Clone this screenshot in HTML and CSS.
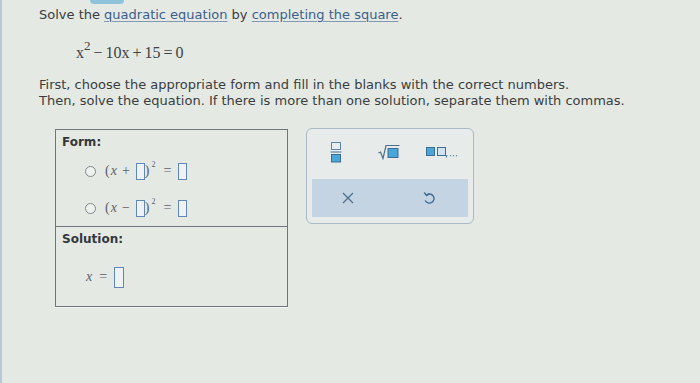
FILE: index.html
```html
<!DOCTYPE html>
<html>
<head>
<meta charset="utf-8">
<link rel="stylesheet" href="styles.css">
</head>
<body>
<div class="page">
  <div class="topbar"><div class="tab"></div></div>
  <div class="content">
    <p class="title">Solve the <span class="link">quadratic equation</span> by <span class="link">completing the square</span>.</p>
    <div class="equation"><span class="var">x</span><sup>2</sup><span class="op">−</span>10<span class="var">x</span><span class="op">+</span>15<span class="op">=</span>0</div>
    <p class="instr">First, choose the appropriate form and fill in the blanks with the correct numbers.<br>Then, solve the equation. If there is more than one solution, separate them with commas.</p>
    <div class="work">
      <div class="answer">
        <div class="cell form-cell">
          <div class="label">Form:</div>
          <div class="option">
            <span class="radio"></span>
            <span class="math"><span>(</span><i>x</i><span class="mop">+</span><span class="blank"></span><span>)</span><sup>2</sup><span class="meq">=</span><span class="blank"></span></span>
          </div>
          <div class="option second">
            <span class="radio"></span>
            <span class="math"><span>(</span><i>x</i><span class="mop">−</span><span class="blank"></span><span>)</span><sup>2</sup><span class="meq">=</span><span class="blank"></span></span>
          </div>
        </div>
        <div class="cell sol-cell">
          <div class="label">Solution:</div>
          <div class="solrow"><span class="math"><i>x</i><span class="meq sol">=</span><span class="blank tall"></span></span></div>
        </div>
      </div>
      <div class="palette">
        <div class="prow">
          <span class="pbtn b-frac">
            <svg width="12" height="22" viewBox="0 0 12 22"><rect x="1.5" y="1.5" width="9" height="7" fill="#e6eef4" stroke="#5f86a8" stroke-width="1"/><line x1="0.5" y1="11" x2="11.5" y2="11" stroke="#5f86a8" stroke-width="1.2"/><rect x="1.5" y="13.5" width="9" height="7.5" fill="#4aa6d8" stroke="#3a6f95" stroke-width="1"/></svg>
          </span>
          <span class="pbtn b-sqrt">
            <svg width="22" height="16" viewBox="0 0 22 16"><polyline points="0.5,9 2.5,8 5,14.5 8,1.5 21.5,1.5" fill="none" stroke="#4d6f8e" stroke-width="1.2"/><rect x="10" y="4.5" width="10" height="9" fill="#4aa6d8" stroke="#3a6f95" stroke-width="1"/></svg>
          </span>
          <span class="pbtn b-list">
            <svg width="34" height="12" viewBox="0 0 34 12"><rect x="0.5" y="1.5" width="8" height="8" fill="#4aa6d8" stroke="#3a6f95" stroke-width="1"/><rect x="11.5" y="1.5" width="8" height="8" fill="#cfe3f0" stroke="#3a6f95" stroke-width="1"/><path d="M21 9 L20.3 11.5" stroke="#3a6f95" stroke-width="1"/><circle cx="24.5" cy="9.8" r="0.7" fill="#5f86a8"/><circle cx="27.5" cy="9.8" r="0.7" fill="#5f86a8"/><circle cx="30.5" cy="9.8" r="0.7" fill="#5f86a8"/></svg>
          </span>
        </div>
        <div class="pactions">
          <span class="pbtn b-x">
            <svg width="12" height="12" viewBox="0 0 12 12"><path d="M1 1 L11 11 M11 1 L1 11" stroke="#4d6f8e" stroke-width="1.3" fill="none"/></svg>
          </span>
          <span class="pbtn b-undo">
            <svg width="12" height="14" viewBox="0 0 12 14"><path d="M3.2 4.2 A4.6 4.6 0 1 1 2.2 9.5" fill="none" stroke="#3f6f98" stroke-width="1.4"/><path d="M1.2 1.5 L3.6 4.6 L6.6 2.6" fill="none" stroke="#3f6f98" stroke-width="1.4"/></svg>
          </span>
        </div>
      </div>
    </div>
  </div>
</div>
</body>
</html>
```

FILE: styles.css
```css
html, body {
  margin: 0;
  padding: 0;
}
body {
  width: 700px;
  height: 383px;
  overflow: hidden;
  background: #e5e9e4;
  font-family: "DejaVu Sans", Verdana, sans-serif;
  color: #3a3d40;
}
.page {
  height: 383px;
  border-left: 2px solid #b9c7d6;
  box-sizing: border-box;
}
.topbar {
  height: 4px;
  padding-left: 88px;
}
.tab {
  width: 34px;
  height: 4px;
  background: #8fc3dc;
  border-radius: 0 0 6px 6px;
}
.content {
  padding-left: 37px;
}
p {
  margin: 0;
}
.title {
  font-size: 13px;
  line-height: 16px;
  margin-top: 3px;
}
.link {
  color: #3b5f8c;
  text-decoration: underline;
  text-decoration-color: #7f98b6;
  text-underline-offset: 2px;
}
.equation {
  font-family: "Liberation Serif", "Times New Roman", serif;
  font-size: 16px;
  line-height: 20px;
  margin-top: 20px;
  margin-left: 37px;
  color: #3e4145;
}
.equation sup {
  font-size: 13px;
  position: relative;
  top: -2px;
  vertical-align: super;
  line-height: 0;
  margin-left: 0;
}
.equation .op {
  margin: 0 3px;
}
.equation .var {
  font-style: normal;
}
.instr {
  font-size: 13px;
  line-height: 16px;
  margin-top: 14px;
}
.work {
  display: flex;
  align-items: flex-start;
  margin-top: 20px;
  margin-left: 16px;
}
.answer {
  width: 233px;
  border: 1px solid #6e787c;
  box-sizing: border-box;
  box-shadow: 0 1px 0 #f4f6f4;
}
.cell {
  padding: 5px 6px 0 6px;
}
.form-cell {
  height: 97px;
  box-sizing: border-box;
  border-bottom: 1px solid #6e787c;
}
.sol-cell {
  height: 79px;
  box-sizing: border-box;
}
.label {
  font-size: 12px;
  font-weight: bold;
  line-height: 14px;
  color: #34383c;
}
.option {
  display: flex;
  align-items: center;
  margin-left: 23px;
  height: 20px;
  margin-top: 12px;
}
.option.second {
  margin-top: 17px;
}
.radio {
  width: 9px;
  height: 9px;
  border: 1px solid #7d878c;
  border-radius: 50%;
  background: #eef1ee;
  margin-right: 9px;
}
.math {
  font-family: "Liberation Serif", "Times New Roman", serif;
  font-size: 14px;
  color: #5a6068;
  display: inline-flex;
  align-items: center;
}
.math i {
  font-style: italic;
  margin-left: 1px;
}
.math sup {
  font-size: 8px;
  align-self: flex-start;
  margin-top: -3px;
  margin-left: 2px;
}
.mop {
  margin: 0 6px 0 5px;
}
.meq {
  margin: 0 7px 0 8px;
}
.meq.sol {
  margin: 0 7px 0 7px;
}
.blank {
  display: inline-block;
  width: 7px;
  height: 15px;
  border: 1px solid #5f88b8;
  background: #eef2f5;
}
.blank.tall {
  width: 8px;
  height: 19px;
}
.solrow {
  margin-left: 23px;
  margin-top: 20px;
}
.palette {
  margin-left: 18px;
  margin-top: -1px;
  width: 168px;
  height: 96px;
  box-sizing: border-box;
  border: 1.5px solid #a9b9c6;
  border-radius: 6px;
  padding: 6px 5px 5px 5px;
  display: flex;
  flex-direction: column;
  background: #e7ebea;
}
.prow {
  display: flex;
  align-items: center;
  height: 34px;
  padding-left: 18px;
}
.b-sqrt {
  margin-left: 36px;
}
.b-list {
  margin-left: 26px;
}
.pactions {
  margin-top: 10px;
  background: #c4d4e2;
  height: 38px;
  display: flex;
  align-items: center;
  padding-left: 30px;
}
.b-undo {
  margin-left: 69px;
}
.pbtn {
  display: inline-flex;
  align-items: center;
  justify-content: center;
}
```
